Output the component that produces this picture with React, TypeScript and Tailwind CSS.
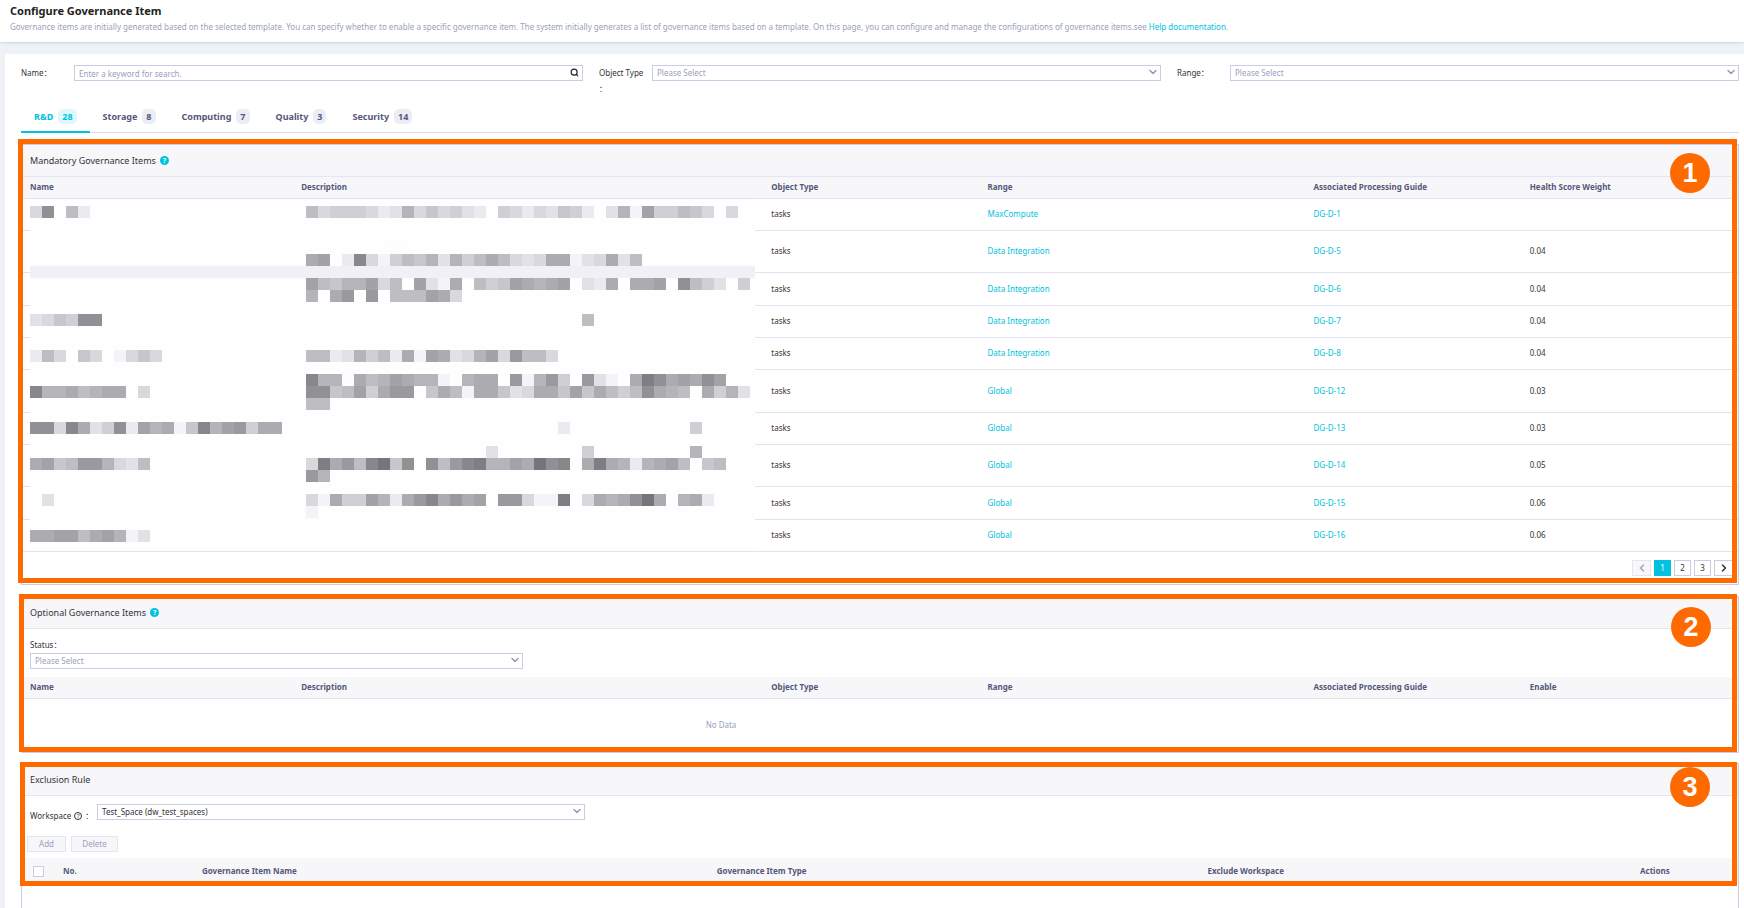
import { ReactNode } from "react";
import { ChevronDown, ChevronLeft, ChevronRight, Search } from "lucide-react";
import clsx from "clsx";

const tabs = [
  { name: "R&D", count: 28 },
  { name: "Storage", count: 8 },
  { name: "Computing", count: 7 },
  { name: "Quality", count: 3 },
  { name: "Security", count: 14 },
];

const mandatoryItems = [
  { range: "MaxCompute", guide: "DG-D-1", weight: "", height: "h-8" },
  { range: "Data Integration", guide: "DG-D-5", weight: "0.04", height: "h-[42px]" },
  { range: "Data Integration", guide: "DG-D-6", weight: "0.04", height: "h-[33px]" },
  { range: "Data Integration", guide: "DG-D-7", weight: "0.04", height: "h-8" },
  { range: "Data Integration", guide: "DG-D-8", weight: "0.04", height: "h-8" },
  { range: "Global", guide: "DG-D-12", weight: "0.03", height: "h-[43px]" },
  { range: "Global", guide: "DG-D-13", weight: "0.03", height: "h-8" },
  { range: "Global", guide: "DG-D-14", weight: "0.05", height: "h-[42px]" },
  { range: "Global", guide: "DG-D-15", weight: "0.06", height: "h-[33px]" },
  { range: "Global", guide: "DG-D-16", weight: "0.06", height: "h-8" },
];

// Each character is one tile, 0 is the darkest grey and f the lightest, a dot is empty
const mosaicRows = [
  { row: 0, name: "b3.8d", description: "8baaabdc7b9bacd.abdbc9ad.c7e5aa89b.b" },
  { row: 3, name: "", description: ".......f" },
  { row: 4, name: "", description: "65.d2bea897c7a868bcb66ecb6c8" },
  { row: 6, name: "", description: "589775b8.5ce6.8a956765.cd6.665.38ac.a" },
  { row: 7, name: "", description: "7.64.4.88856b" },
  { row: 9, name: "cb9a33", description: ".......................8" },
  { row: 12, name: "d8b.9b.eb9b", description: "88dc7a8d6e56cb75b488b" },
  { row: 14, name: "", description: "277f6875677e.766.4e74a.4ce.61365635" },
  { row: 15, name: "27768766.b", description: "33985a644.968e669cb6695968a83678.6a7c" },
  { row: 16, name: "", description: "88" },
  { row: 18, name: "33b26ca3d576e92754a66", description: ".....................d..........a" },
  { row: 20, name: "", description: "...............c.......a........7" },
  { row: 21, name: "6598447bc8", description: "b16482093.384217756032f6167d7658.98" },
  { row: 22, name: "", description: "47" },
  { row: 24, name: ".c", description: "be6aa57d6426465.44bee1.b676306.76d" },
  { row: 25, name: "", description: "e" },
  { row: 27, name: "66558657ec", description: "" },
];

const TILE = 12;
const DESCRIPTION_OFFSET = 23;

const Mosaic = () => {
  const renderTiles = (tiles: string, row: number, offset: number) =>
    tiles.split("").map((tile, i) => {
      if (tile === ".") return null;
      const level = 118 + parseInt(tile, 16) * 9;
      return (
        <rect
          key={`${row}-${offset + i}`}
          x={(offset + i) * TILE}
          y={7 + row * TILE}
          width={TILE}
          height={TILE}
          fill={`rgb(${level}, ${level}, ${Math.min(level + 4, 255)})`}
        />
      );
    });

  return (
    <svg
      className="absolute top-[22px] left-2"
      width="725"
      height="352"
      shapeRendering="crispEdges"
      aria-hidden="true"
    >
      <rect width="725" height="352" fill="#fefefe" />
      <rect y="67" width="725" height="12" fill="#f0f1f7" />
      {mosaicRows.map(({ row, name, description }) => (
        <g key={row}>
          {renderTiles(name, row, 0)}
          {renderTiles(description, row, DESCRIPTION_OFFSET)}
        </g>
      ))}
    </svg>
  );
};

const Colon = () => <span className="font-['Noto_Sans_CJK_SC',sans-serif]">：</span>;

interface SelectBoxProps {
  id: string;
  value: string;
  filled?: boolean;
  className?: string;
}

const SelectBox = ({ id, value, filled, className }: SelectBoxProps) => (
  <div className={clsx("relative h-4", className)}>
    <select
      id={id}
      className={clsx(
        "block h-4 w-full appearance-none border border-[#c9cce2] bg-white pl-1 leading-[14px]",
        filled ? "text-[#333]" : "text-[#9a9fbd]"
      )}
    >
      <option>{value}</option>
    </select>
    <ChevronDown
      className="pointer-events-none absolute top-px right-[2px] text-[#9398b6]"
      size={12}
      strokeWidth={3}
    />
  </div>
);

const Callout = ({ number, frame, badge }: { number: number; frame: string; badge: string }) => (
  <>
    <div className={clsx("pointer-events-none absolute z-10 border-[5px] border-[#ff6a00]", frame)} />
    <span
      className={clsx(
        "absolute z-20 flex size-10 items-center justify-center rounded-full bg-[#ff6a00] font-['Liberation_Sans',sans-serif] text-[27px] leading-none font-bold text-white",
        badge
      )}
    >
      {number}
    </span>
  </>
);

const CardTitle = ({ children, help }: { children: ReactNode; help?: boolean }) => (
  <div className="flex h-8 items-center gap-1 border-b border-[#e4e5f0] bg-[#f7f7fa] pl-2 text-[#333]">
    <h2 className="text-[9px]">{children}</h2>
    {help && (
      <span className="flex size-[9px] items-center justify-center rounded-full bg-[#00c1de] text-[7px] leading-none font-bold text-white">
        ?
      </span>
    )}
  </div>
);

const ItemsTable = ({ lastColumn, children }: { lastColumn: string; children: ReactNode }) => (
  <table className="w-full table-fixed border-separate border-spacing-0 text-left">
    <thead>
      <tr className="h-[22px] bg-[#f7f7fa] text-[#555878] [&>th]:border-b [&>th]:border-[#e2e3f0] [&>th]:p-0 [&>th]:pb-px [&>th]:pl-2">
        <th className="w-[15.8%]">Name</th>
        <th className="w-[27.4%]">Description</th>
        <th className="w-[12.6%]">Object Type</th>
        <th className="w-[19%]">Range</th>
        <th className="w-[12.6%]">Associated Processing Guide</th>
        <th>{lastColumn}</th>
      </tr>
    </thead>
    <tbody>{children}</tbody>
  </table>
);

const Pagination = () => (
  <nav className="mt-2 flex justify-end gap-[3px] pr-[5px] pb-2" aria-label="Pagination">
    <button
      disabled
      aria-label="Previous page"
      className="flex h-4 w-[19px] items-center justify-center border border-[#e4e5f0] bg-[#f7f7fa] text-[#a0a4bd]"
    >
      <ChevronLeft size={12} strokeWidth={3} />
    </button>
    <button className="h-4 w-[17px] bg-[#00c1de] text-white">1</button>
    <button className="h-4 w-[17px] border border-[#c9cce2] leading-none">2</button>
    <button className="h-4 w-[17px] border border-[#c9cce2] leading-none">3</button>
    <button
      aria-label="Next page"
      className="flex h-4 w-[19px] items-center justify-center border border-[#c9cce2]"
    >
      <ChevronRight size={12} strokeWidth={3} />
    </button>
  </nav>
);

const App = () => {
  return (
    <div className="flex min-h-screen flex-col bg-[#eef2f6] font-['Noto_Sans','Noto_Sans_CJK_SC',sans-serif] text-[8px] leading-3 text-[#333]">
      <header className="h-[42px] bg-white pt-1 pl-[10px] shadow-sm">
        <h1 className="text-[11px] leading-[14px] font-bold text-[#222]">Configure Governance Item</h1>
        <p className="mt-[3px] text-[#9a9fbd]">
          Governance items are initially generated based on the selected template. You can specify
          whether to enable a specific governance item. The system initially generates a list of
          governance items based on a template. On this page, you can configure and manage the
          configurations of governance items.see{" "}
          <a href="#" className="text-[#00c1de]">
            Help documentation
          </a>
          .
        </p>
      </header>

      <main className="mt-3 ml-[5px] flex flex-1 flex-col bg-white pt-[11px] pr-[5px] pl-4">
        {/* Filters */}
        <form className="grid grid-cols-3 gap-4">
          <div className="flex">
            <label htmlFor="name" className="w-[53px] shrink-0 leading-4">
              Name
              <Colon />
            </label>
            <div className="relative h-4 flex-1">
              <input
                id="name"
                type="text"
                placeholder="Enter a keyword for search."
                className="block h-4 w-full border border-[#c9cce2] pl-1 placeholder:text-[#9a9fbd]"
              />
              <Search className="absolute top-[3px] right-1 text-[#222]" size={9} strokeWidth={3} />
            </div>
          </div>
          <div className="flex">
            <label htmlFor="objectType" className="w-[53px] shrink-0 pr-2 leading-4">
              Object Type <Colon />
            </label>
            <SelectBox id="objectType" value="Please Select" className="flex-1" />
          </div>
          <div className="flex">
            <label htmlFor="range" className="w-[53px] shrink-0 leading-4">
              Range
              <Colon />
            </label>
            <SelectBox id="range" value="Please Select" className="flex-1" />
          </div>
        </form>

        {/* Tabs */}
        <div role="tablist" className="mt-2 flex h-7 border-b border-[#dcdde8]">
          {tabs.map((tab, index) => (
            <button
              key={tab.name}
              role="tab"
              aria-selected={index === 0}
              className={clsx(
                "flex h-7 items-start gap-[5px] px-[13px] pt-1 text-[9px] leading-[15px] font-bold",
                index === 0 ? "border-b-2 border-[#00c1de] text-[#00c1de]" : "text-[#555878]"
              )}
            >
              {tab.name}
              <span
                className={clsx("rounded-[5px] px-1", index === 0 ? "bg-[#e0f7fb]" : "bg-[#ebedf6]")}
              >
                {tab.count}
              </span>
            </button>
          ))}
        </div>

        {/* Mandatory items */}
        <section className="relative mt-[11px] border border-[#c9cce2]">
          <CardTitle help>Mandatory Governance Items</CardTitle>
          <div className="relative">
            <ItemsTable lastColumn="Health Score Weight">
              {mandatoryItems.map((item) => (
                <tr
                  key={item.guide}
                  className={clsx(
                    "[&>td]:border-b [&>td]:border-[#e2e3f0] [&>td]:p-0 [&>td]:pb-px [&>td]:pl-2",
                    item.height
                  )}
                >
                  <td />
                  <td />
                  <td>tasks</td>
                  <td>
                    <a href="#" className="text-[#00c1de]">
                      {item.range}
                    </a>
                  </td>
                  <td>
                    <a href="#" className="text-[#00c1de]">
                      {item.guide}
                    </a>
                  </td>
                  <td>{item.weight}</td>
                </tr>
              ))}
            </ItemsTable>
            <Mosaic />
          </div>
          <Pagination />
          <Callout number={1} frame="-top-[6px] -left-1 right-px bottom-px" badge="top-2 right-7" />
        </section>

        {/* Optional items */}
        <section className="relative mt-[11px] border border-[#c9cce2]">
          <CardTitle help>Optional Governance Items</CardTitle>
          <div className="px-2 pt-[10px] pb-2">
            <label htmlFor="status" className="mb-[2px] block">
              Status
              <Colon />
            </label>
            <SelectBox id="status" value="Please Select" className="w-[29%]" />
          </div>
          <ItemsTable lastColumn="Enable">
            <tr>
              <td colSpan={6} className="h-[53px] pr-[318px] pb-px text-center text-[#9a9fbd]">
                No Data
              </td>
            </tr>
          </ItemsTable>
          <Callout number={2} frame="-top-[3px] -left-[3px] right-px bottom-0" badge="top-[10px] right-[27px]" />
        </section>

        {/* Exclusion rule */}
        <section className="relative mt-[10px] flex-1 border border-b-0 border-[#c9cce2]">
          <CardTitle>Exclusion Rule</CardTitle>
          <div className="flex h-7 items-start pt-2 pl-2">
            <label htmlFor="workspace" className="flex w-[67px] items-center gap-[3px] pt-[6px]">
              Workspace
              <span className="flex size-2 items-center justify-center rounded-full border border-[#333] text-[6px] leading-none">
                ?
              </span>
              <Colon />
            </label>
            <SelectBox id="workspace" value="Test_Space (dw_test_spaces)" filled className="w-[28.6%]" />
          </div>
          <div className="mt-3 flex gap-[5px] pl-[5px]">
            <button disabled className="h-4 w-[39px] border border-[#e4e5f0] bg-[#f7f7fa] leading-none text-[#9a9fbd]">
              Add
            </button>
            <button disabled className="h-4 w-[47px] border border-[#e4e5f0] bg-[#f7f7fa] leading-none text-[#9a9fbd]">
              Delete
            </button>
          </div>
          <table className="mt-[6px] w-full table-fixed text-left">
            <thead>
              <tr className="h-[26px] bg-[#f7f7fa] text-[#555878] [&>th]:p-0">
                <th className="w-[41px] pl-[11px]!">
                  <input
                    type="checkbox"
                    aria-label="Select all"
                    className="block size-[11px] appearance-none border border-[#c9cce2] bg-white"
                  />
                </th>
                <th className="w-[8.1%]">No.</th>
                <th className="w-[30%]">Governance Item Name</th>
                <th className="w-[28.6%]">Governance Item Type</th>
                <th className="w-[25.2%]">Exclude Workspace</th>
                <th>Actions</th>
              </tr>
            </thead>
          </table>
          <Callout number={3} frame="-top-[2px] -left-[2px] right-px h-[124px]" badge="top-[3px] right-7" />
        </section>
      </main>
    </div>
  );
};

export default App;
